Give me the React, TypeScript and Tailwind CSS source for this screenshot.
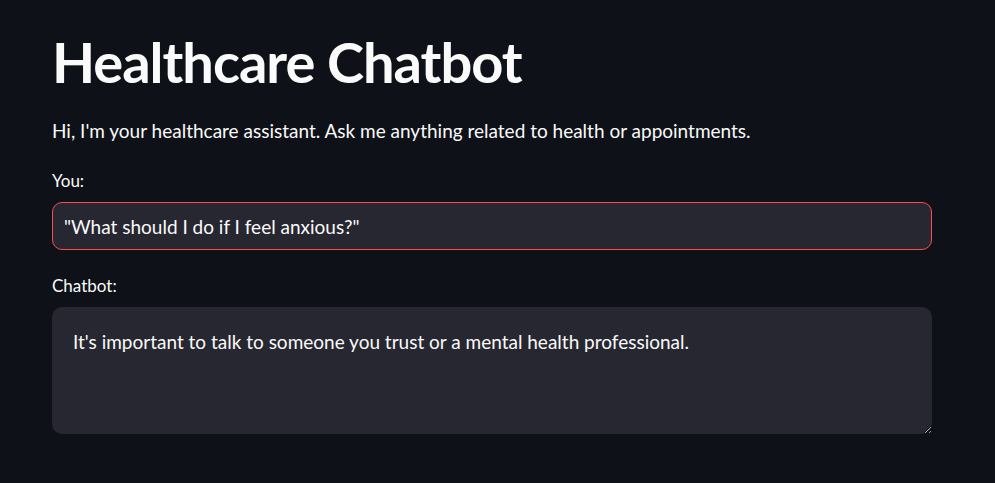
const font = { fontFamily: 'Lato, "Noto Sans", sans-serif' }

export default function App() {
  return (
    <main className="min-h-screen w-full bg-[#0e1117] text-[#fafafa]" style={font}>
      <div className="w-[880px] ml-[52px] pt-[30px] flex flex-col">
        <h1 className="text-[56px] leading-[64px] font-bold tracking-[-1px]">Healthcare Chatbot</h1>

        <p className="mt-[22px] text-[19px] leading-[30px]">
          Hi, I'm your healthcare assistant. Ask me anything related to health or appointments.
        </p>

        <label className="mt-[24px] text-[17px] leading-[22px]">You:</label>
        <input
          className="mt-[10px] h-[48px] rounded-[10px] border border-[#ff4b4b] bg-[#262730] px-[11px] text-[19px] text-[#fafafa] outline-none"
          style={font}
          defaultValue={'"What should I do if I feel anxious?"'}
        />

        <label className="mt-[25px] text-[17px] leading-[22px]">Chatbot:</label>
        <textarea
          className="mt-[10px] h-[127px] rounded-[10px] bg-[#262730] px-[21px] pt-[20px] pb-[16px] text-[19px] leading-[30px] text-[#fafafa] outline-none resize-y"
          style={font}
          defaultValue="It's important to talk to someone you trust or a mental health professional."
        />
      </div>
    </main>
  )
}
